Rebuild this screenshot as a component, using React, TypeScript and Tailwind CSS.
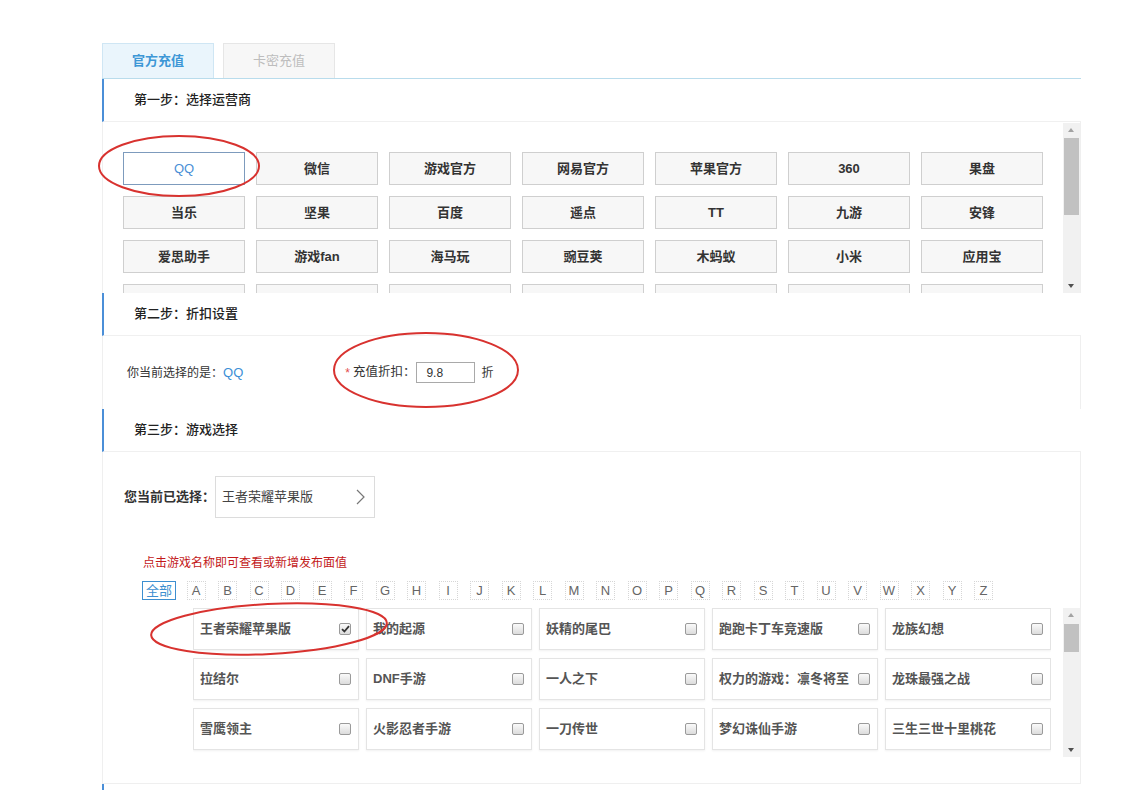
import React from 'react';

const operators = [
  ['QQ', '微信', '游戏官方', '网易官方', '苹果官方', '360', '果盘'],
  ['当乐', '坚果', '百度', '遥点', 'TT', '九游', '安锋'],
  ['爱思助手', '游戏fan', '海马玩', '豌豆荚', '木蚂蚁', '小米', '应用宝'],
  ['', '', '', '', '', '', ''],
];

const games = [
  ['王者荣耀苹果版', '我的起源', '妖精的尾巴', '跑跑卡丁车竞速版', '龙族幻想'],
  ['拉结尔', 'DNF手游', '一人之下', '权力的游戏：凛冬将至', '龙珠最强之战'],
  ['雪鹰领主', '火影忍者手游', '一刀传世', '梦幻诛仙手游', '三生三世十里桃花'],
];

const letters = 'ABCDEFGHIJKLMNOPQRSTUVWXYZ'.split('');

function FakeScrollbar({ height, thumbTop, thumbHeight }: { height: number; thumbTop: number; thumbHeight: number }) {
  return (
    <div className="relative w-[17px] shrink-0 bg-[#f1f1f1]" style={{ height }}>
      <div className="absolute left-[5px] top-[5px] h-0 w-0 border-x-[3.5px] border-b-[4px] border-x-transparent border-b-[#a3a3a3]" />
      <div className="absolute left-[1px] w-[15px] bg-[#c1c1c1]" style={{ top: thumbTop, height: thumbHeight }} />
      <div className="absolute bottom-[5px] left-[5px] h-0 w-0 border-x-[3.5px] border-t-[4px] border-x-transparent border-t-[#505050]" />
    </div>
  );
}

function StepHeader({ title }: { title: string }) {
  return (
    <div className="flex h-[43px] items-center border-b border-l-2 border-b-[#f0f0f0] border-l-[#4b8fd8] bg-white pl-[30px] text-[13px] font-medium text-[#222]">
      {title}
    </div>
  );
}

function Checkbox({ checked }: { checked?: boolean }) {
  return (
    <span className="flex h-[12px] w-[12px] shrink-0 items-center justify-center rounded-[2px] border border-[#9a9a9a] bg-gradient-to-b from-[#fafafa] to-[#dcdcdc]">
      {checked && (
        <svg width="9" height="8" viewBox="0 0 9 8">
          <path d="M1 4.2 L3.4 6.5 L8 1.2" fill="none" stroke="#333" strokeWidth="1.8" />
        </svg>
      )}
    </span>
  );
}

export default function App() {
  return (
    <div
      className="relative h-[790px] w-[1143px] overflow-hidden bg-white"
      style={{ fontFamily: '"Liberation Sans", "Noto Sans CJK SC", sans-serif' }}
    >
      <div className="ml-[102px] w-[979px] pt-[43px]">
        {/* tabs */}
        <div className="flex h-[35px] gap-[9px]">
          <div className="flex w-[112px] items-center justify-center border border-b-0 border-[#cfe6f4] bg-[#eaf5fc] text-[13px] font-bold text-[#3d97d6]">
            官方充值
          </div>
          <div className="flex w-[112px] items-center justify-center border border-b-0 border-[#e6e6e6] bg-[#f7f7f7] text-[13px] text-[#bdbdbd]">
            卡密充值
          </div>
        </div>
        <div className="h-px bg-[#b9dcec]" />

        {/* step 1 */}
        <StepHeader title="第一步：选择运营商" />
        <div className="flex h-[171px] overflow-hidden border-l border-r border-[#efefef] pl-[20px]">
          <div className="grid h-[171px] grid-cols-[repeat(7,122px)] content-start gap-x-[11px] gap-y-[11px] overflow-hidden pt-[30px]">
            {operators.flat().map((name, i) =>
              i === 0 ? (
                <div
                  key={i}
                  className="flex h-[33px] items-center justify-center border border-[#7d9bbd] bg-white text-[13px] text-[#4a8fd6]"
                >
                  {name}
                </div>
              ) : (
                <div
                  key={i}
                  className="flex h-[33px] items-center justify-center border border-[#cfcfcf] bg-[#f7f7f7] text-[13px] font-bold text-[#333]"
                >
                  {name}
                </div>
              )
            )}
          </div>
          <div className="ml-auto mt-px">
            <FakeScrollbar height={170} thumbTop={15} thumbHeight={77} />
          </div>
        </div>

        {/* step 2 */}
        <StepHeader title="第二步：折扣设置" />
        <div className="flex h-[73px] items-center border-l border-r border-[#efefef] pl-[24px] text-[12px] text-[#333]">
          <span>你当前选择的是：</span>
          <span className="text-[13px] text-[#3d8fd6]">QQ</span>
          <span className="ml-[102px] text-[#e34b4b]">*</span>
          <span className="ml-[3px] text-[12.5px]">充值折扣：</span>
          <div className="ml-[1px] flex h-[21px] w-[59px] items-center border border-[#a9a9a9] pl-[9px] text-[12px]">9.8</div>
          <span className="ml-[6px]">折</span>
        </div>

        {/* step 3 */}
        <StepHeader title="第三步：游戏选择" />
        <div className="h-[332px] border-b border-l border-r border-[#efefef]">
          <div className="flex items-center pl-[21px] pt-[24px]">
            <span className="text-[13px] font-bold text-[#333]">您当前已选择：</span>
            <div className="flex h-[42px] w-[160px] items-center justify-between border border-[#dcdcdc] pl-[6px] pr-[9px] text-[13px] text-[#444]">
              <span>王者荣耀苹果版</span>
              <svg width="9" height="16" viewBox="0 0 9 16">
                <path d="M1 1 L8 8 L1 15" fill="none" stroke="#777" strokeWidth="1.2" />
              </svg>
            </div>
          </div>
          <div className="mt-[36px] pl-[40px] text-[12px] text-[#c3191a]">点击游戏名称即可查看或新增发布面值</div>
          <div className="mt-[9px] flex items-center gap-[12.5px] pl-[39px]">
            <span className="flex h-[19px] w-[34px] items-center justify-center border border-[#3d8fd0] text-[13px] text-[#3d8fd0]">
              全部
            </span>
            {letters.map((l, i) => (
              <span
                key={l}
                className={`flex h-[19px] w-[19px] items-center justify-center border border-dotted border-[#d6d6d6] text-[13px] text-[#666] ${i === 0 ? '-ml-[2px]' : ''}`}
              >
                {l}
              </span>
            ))}
          </div>
          <div className="mt-[8px] flex pl-[90px]">
            <div className="grid h-[149px] shrink-0 grid-cols-[repeat(5,166px)] content-start gap-x-[7px] gap-y-[8px] overflow-hidden">
              {games.flat().map((g, i) => (
                <div
                  key={g}
                  className="flex h-[42px] items-center justify-between border border-[#e4e4e4] pl-[6px] pr-[7px] text-[13px] font-bold text-[#555] shadow-[0_1px_2px_rgba(0,0,0,0.06)]"
                >
                  <span className="whitespace-nowrap">{g}</span>
                  <Checkbox checked={i === 0} />
                </div>
              ))}
            </div>
            <div className="ml-[12px]">
              <FakeScrollbar height={149} thumbTop={16} thumbHeight={28} />
            </div>
          </div>
        </div>
        <div className="h-[10px] border-l-2 border-[#4b8fd8]" />
      </div>

      {/* red annotation circles */}
      <svg className="pointer-events-none absolute left-0 top-0" width="1143" height="790">
        <ellipse cx="179" cy="166" rx="80" ry="30" fill="none" stroke="#d8322f" strokeWidth="2" />
        <ellipse cx="426" cy="370" rx="92" ry="37" fill="none" stroke="#d8322f" strokeWidth="2" />
        <ellipse
          cx="269"
          cy="629"
          rx="118"
          ry="25"
          fill="none"
          stroke="#d8322f"
          strokeWidth="2"
          transform="rotate(-3 269 629)"
        />
      </svg>
    </div>
  );
}
